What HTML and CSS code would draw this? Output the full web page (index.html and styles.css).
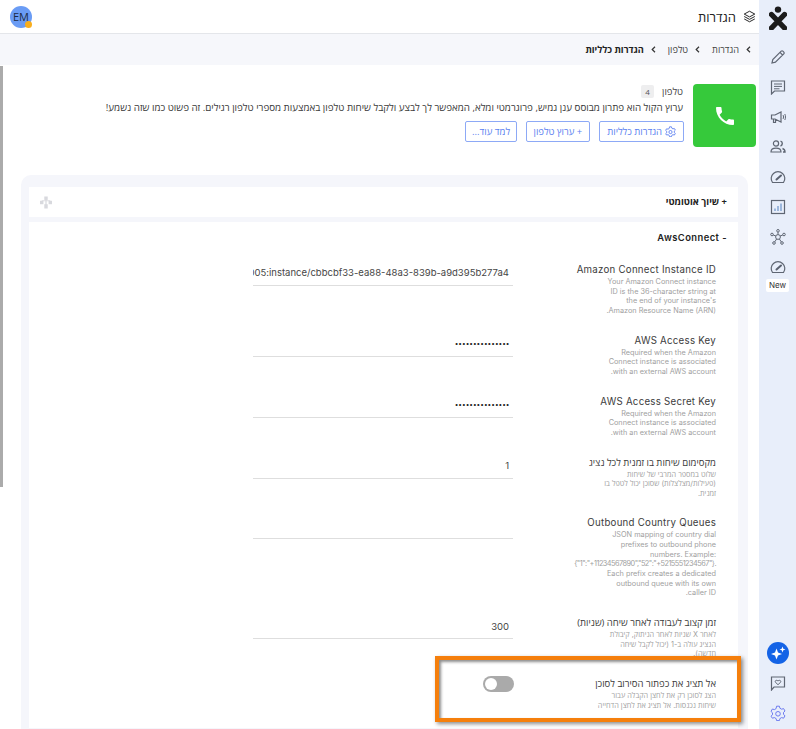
FILE: index.html
```html
<!DOCTYPE html>
<html lang="he" dir="rtl">
<head>
<meta charset="utf-8">
<title>הגדרות</title>
<link rel="stylesheet" href="styles.css">
</head>
<body>
<div class="app">
  <nav class="rail">
    <svg class="logo" viewBox="0 0 18 24" width="18" height="24"><circle cx="9" cy="3.600" r="3.200" fill="#1c1c1c"/><path d="M2.500 8.500 15.500 22M15.500 8.500 2.500 22" stroke="#1c1c1c" stroke-width="5.400" stroke-linecap="round"/></svg>
    <a class="rail-item"><svg viewBox="0 0 16 16" class="ico"><path d="M2 14l.8-3.400L11.200 2.200a1.200 1.200 0 0 1 1.700 0l.9.9a1.200 1.200 0 0 1 0 1.700L5.400 13.200 2 14zM10 3.400l2.600 2.600" fill="none" stroke="#5f6673" stroke-width="1.200"/></svg></a>
    <a class="rail-item"><svg viewBox="0 0 16 16" class="ico"><path d="M1.500 2h13v10H4.500l-3 3V2z" fill="none" stroke="#5f6673" stroke-width="1.200"/><path d="M4 5h8M4 7.400h8M4 9.800h5.500" stroke="#5f6673" stroke-width="1"/></svg></a>
    <a class="rail-item"><svg viewBox="0 0 16 16" class="ico"><path d="M1.500 6h3.500l6-3v10l-6-3H1.500V6zM3.500 10v3.500h2V10" fill="none" stroke="#5f6673" stroke-width="1.200"/><path d="M13 6c.7.8.7 3.200 0 4M14.800 5c.9 1.500.9 4.500 0 6" fill="none" stroke="#5f6673" stroke-width="1"/></svg></a>
    <a class="rail-item"><svg viewBox="0 0 16 16" class="ico"><circle cx="6" cy="4.500" r="2.600" fill="none" stroke="#5f6673" stroke-width="1.200"/><path d="M1 13c0-2.500 2-3.800 5-3.800s5 1.300 5 3.800H1z" fill="none" stroke="#5f6673" stroke-width="1.200"/><path d="M10.500 2.200a2.500 2.500 0 0 1 0 4.800M12.500 9.500c1.500.5 2.500 1.600 2.500 3.500h-2" fill="none" stroke="#5f6673" stroke-width="1.400"/></svg></a>
    <a class="rail-item"><svg viewBox="0 0 16 16" class="ico"><path d="M2.500 13.500A6.800 6.800 0 1 1 13.500 13.500H2.500z" fill="none" stroke="#5f6673" stroke-width="1.200"/><path d="M6.500 10.500 11 6.500" stroke="#5b6270" stroke-width="2" stroke-linecap="round"/></svg></a>
    <a class="rail-item"><svg viewBox="0 0 16 16" class="ico"><rect x="1.500" y="1.500" width="13" height="13" fill="none" stroke="#5f6673" stroke-width="1.200"/><path d="M5 12V9.500M8 12V7M11 12V4.500" stroke="#6b93c9" stroke-width="1.200"/></svg></a>
    <a class="rail-item"><svg viewBox="0 0 16 16" class="ico"><g fill="none" stroke="#5f6673" stroke-width="1"><circle cx="8" cy="8" r="2.400"/><circle cx="8" cy="1.800" r="1.300"/><circle cx="2" cy="5.500" r="1.300"/><circle cx="14" cy="5.500" r="1.300"/><circle cx="4" cy="14" r="1.300"/><circle cx="12" cy="14" r="1.300"/><path d="M8 3.100v2.500M3.200 6l2.700 1M12.800 6l-2.700 1M4.700 12.900l2-3M11.300 12.900l-2-3"/></g></svg></a>
    <a class="rail-item"><svg viewBox="0 0 16 16" class="ico"><path d="M2.500 13.500A6.800 6.800 0 1 1 13.500 13.500H2.500z" fill="none" stroke="#5f6673" stroke-width="1.200"/><path d="M6.500 10.500 11 6.500" stroke="#5b6270" stroke-width="2" stroke-linecap="round"/></svg></a>
    <span class="new-chip">New</span>
    <div class="rail-bottom">
      <span class="ai-btn"><svg viewBox="0 0 22 22" width="22" height="22"><circle cx="11" cy="11" r="11" fill="#1463e6"/><path d="M9.500 6.500 11 10.500l4 1.500-4 1.500-1.500 4-1.500-4-4-1.500 4-1.500zM15.500 4.500l.8 2.200 2.200.8-2.200.8-.8 2.200-.8-2.200-2.200-.8 2.200-.8z" fill="#fff"/></svg></span>
      <a class="rail-item"><svg viewBox="0 0 16 16" class="ico"><path d="M1.500 2h13v10H4l-2.500 3V2z" fill="none" stroke="#5f6673" stroke-width="1.200"/><path d="M8 9.800 5.500 7.200c-1-1.300.9-2.800 2.500-1.200 1.600-1.600 3.500-.1 2.500 1.200z" fill="none" stroke="#5f6673" stroke-width="1"/></svg></a>
      <a class="rail-item"><svg viewBox="0 0 16 16" class="ico"><path d="M6.600 1.200h2.800l.5 2 1.700 1 2-.6 1.400 2.400-1.500 1.400v2l1.500 1.400-1.400 2.400-2-.6-1.700 1-.5 2H6.600l-.5-2-1.700-1-2 .6L1 11.200l1.500-1.400v-2L1 6.400l1.400-2.400 2 .6 1.700-1z" fill="none" stroke="#6d7bf0" stroke-width="1"/><circle cx="8" cy="8.800" r="2.300" fill="none" stroke="#6d7bf0" stroke-width="1"/></svg></a>
    </div>
  </nav>

  <div class="main">
    <header class="topbar">
      <div class="page-title">
        <svg viewBox="0 0 16 16" width="13" height="13"><path d="M8 1.500 14.500 5 8 8.500 1.500 5z" fill="none" stroke="#222" stroke-width="1.200"/><path d="M1.500 8 8 11.500 14.500 8M1.500 11 8 14.500 14.500 11" fill="none" stroke="#222" stroke-width="1.200"/></svg>
        <span>הגדרות</span>
      </div>
      <div class="avatar">EM<i class="presence"></i></div>
    </header>
    <div class="crumbs">
      <svg class="chev" viewBox="0 0 5 7"><path d="M4 .8 1.200 3.500 4 6.200" fill="none" stroke="#333" stroke-width="1.200"/></svg><span class="crumb">הגדרות</span>
      <svg class="chev" viewBox="0 0 5 7"><path d="M4 .8 1.200 3.500 4 6.200" fill="none" stroke="#333" stroke-width="1.200"/></svg><span class="crumb">טלפון</span>
      <svg class="chev" viewBox="0 0 5 7"><path d="M4 .8 1.200 3.500 4 6.200" fill="none" stroke="#333" stroke-width="1.200"/></svg><strong class="crumb">הגדרות כלליות</strong>
    </div>
    <div class="scrollthumb"></div>
    <section class="intro">
      <div class="tile"><svg viewBox="0 0 24 24" width="24" height="24"><path fill="#fff" d="M6.620 10.790c1.440 2.830 3.760 5.140 6.590 6.590l2.200-2.200c.27-.27.67-.36 1.020-.24 1.120.37 2.330.57 3.570.57.55 0 1 .45 1 1V20c0 .55-.45 1-1 1-9.390 0-17-7.610-17-17 0-.55.45-1 1-1h3.500c.55 0 1 .45 1 1 0 1.250.2 2.450.57 3.570.11.35.03.74-.25 1.020l-2.200 2.200z"/></svg></div>
      <div class="intro-body">
        <div class="intro-head"><span class="intro-name">טלפון</span><span class="badge">4</span></div>
        <p class="intro-text">ערוץ הקול הוא פתרון מבוסס ענן גמיש, פרוגרמטי ומלא, המאפשר לך לבצע ולקבל שיחות טלפון באמצעות מספרי טלפון רגילים. זה פשוט כמו שזה נשמע!</p>
        <div class="actions">
          <button class="btn"><svg viewBox="0 0 16 16" width="11" height="11"><path d="M6.600 1.200h2.800l.5 2 1.700 1 2-.6 1.400 2.400-1.500 1.400v2l1.500 1.400-1.400 2.400-2-.6-1.700 1-.5 2H6.600l-.5-2-1.700-1-2 .6L1 11.200l1.500-1.400v-2L1 6.400l1.400-2.400 2 .6 1.700-1z" fill="none" stroke="#5b7ff0" stroke-width="1.300"/><circle cx="8" cy="8.800" r="2.300" fill="none" stroke="#5b7ff0" stroke-width="1.300"/></svg>הגדרות כלליות</button>
          <button class="btn">+ ערוץ טלפון</button>
          <button class="btn btn-more">למד עוד...</button>
        </div>
      </div>
    </section>

    <section class="panel">
      <div class="card card-collapsed">
        <h3 class="card-title">+ שיוך אוטומטי</h3>
        <svg class="tree" viewBox="0 0 14 14" width="12" height="13"><g fill="#d8d9de"><rect x="5" y="0" width="4" height="4"/><rect x="0" y="5" width="4" height="4"/><rect x="10" y="5" width="4" height="4"/><rect x="5" y="9" width="4" height="5"/><rect x="6.300" y="3" width="1.400" height="7"/><rect x="2" y="4.500" width="10" height="1"/></g></svg>
      </div>
      <div class="card">
        <h3 class="card-title card-title-en">- AwsConnect</h3>
        <div class="form">
          <div class="row">
            <div class="label"><h4>Amazon Connect Instance ID</h4><p>Your Amazon Connect instance<br>ID is the 36-character string at<br>the end of your instance's<br>Amazon Resource Name (ARN).</p></div>
            <input class="field" type="text" aria-label="Instance ID" value="arn:aws:connect:us-east-1:123456789005:instance/cbbcbf33-ea88-48a3-839b-a9d395b277a4">
          </div>
          <div class="row">
            <div class="label"><h4>AWS Access Key</h4><p>Required when the Amazon<br>Connect instance is associated<br>with an external AWS account.</p></div>
            <input class="field field-secret" type="password" aria-label="Access Key" value="xxxxxxxxxxxxxxx">
          </div>
          <div class="row">
            <div class="label"><h4>AWS Access Secret Key</h4><p>Required when the Amazon<br>Connect instance is associated<br>with an external AWS account.</p></div>
            <input class="field field-secret" type="password" aria-label="Secret Key" value="xxxxxxxxxxxxxxx">
          </div>
          <div class="row">
            <div class="label"><h4 class="he">מקסימום שיחות בו זמנית לכל נציג</h4><p>שלוט במספר המרבי של שיחות<br>(פעילות/מצלצלות) שסוכן יכול לטפל בו<br>זמנית.</p></div>
            <input class="field" type="text" aria-label="Max" value="1">
          </div>
          <div class="row">
            <div class="label"><h4>Outbound Country Queues</h4><p>JSON mapping of country dial<br>prefixes to outbound phone<br><bdi dir="ltr">numbers. Example:</bdi><br><bdi class="json" dir="ltr">{"1":"+11234567890","52":"+5215551234567"}.</bdi><br>Each prefix creates a dedicated<br>outbound queue with its own<br>caller ID.</p></div>
            <input class="field" type="text" aria-label="Queues" value="">
          </div>
          <div class="row">
            <div class="label"><h4 class="he">זמן קצוב לעבודה לאחר שיחה (שניות)</h4><p>לאחר X שניות לאחר הניתוק, קיבולת<br>הנציג עולה ב-1 (יכול לקבל שיחה<br>חדשה).</p></div>
            <input class="field" type="text" aria-label="Timeout" value="300">
          </div>
          <div class="row">
            <div class="label"><h4 class="he">אל תציג את כפתור הסירוב לסוכן</h4><p>הצג לסוכן רק את לחצן הקבלה עבור<br>שיחות נכנסות. אל תציג את לחצן הדחייה</p></div>
            <div class="toggle-cell"><span class="toggle"><i></i></span></div>
          </div>
        </div>
      </div>
    </section>
    <div class="highlight"></div>
  </div>
</div>
</body>
</html>
```
FILE: styles.css
```css
* { box-sizing: border-box; }
html, body { margin: 0; height: 729px; overflow: hidden; }
body { font-family: "Open Sans", "Liberation Sans", sans-serif; color: #222; background: #fff; }
h3, h4, p { margin: 0; }
.app { display: flex; height: 729px; overflow: hidden; }

.rail { width: 37px; flex: none; background: #e8eefa; display: flex; flex-direction: column; align-items: center; padding-top: 6px; }
.logo { margin-bottom: 12px; flex: none; }
.rail-item { width: 16px; height: 30px; display: flex; align-items: center; justify-content: center; flex: none; }
.ico { width: 16px; height: 16px; display: block; }
.new-chip { margin-top: -3px; background: #fff; border-radius: 2px; font: 400 8px/13px Inter, sans-serif; color: #333; padding: 0 3px; width: 23px; text-align: center; }
.rail-bottom { margin-top: auto; display: flex; flex-direction: column; align-items: center; padding-bottom: 1px; }
.ai-btn { display: block; height: 22px; margin-bottom: 4px; }

.main { flex: 1; min-width: 0; height: 729px; overflow: hidden; position: relative; }
.topbar { height: 34px; border-bottom: 1px solid #e4e6ea; display: flex; align-items: center; justify-content: space-between; padding: 0 3px 0 0; }
.page-title { display: flex; align-items: center; gap: 7px; font-size: 13px; color: #222; }
.avatar { position: relative; width: 22px; height: 22px; margin: 0 0 0 10px; border-radius: 50%; background: #6a9cf5; color: #1b2a44; font: 11px/22px "Open Sans", sans-serif; text-align: center; }
.presence { position: absolute; width: 7px; height: 7px; left: 15px; top: 15px; background: #f9ae1d; border-radius: 50%; }
.crumbs { height: 31px; background: #f6f7fb; display: flex; align-items: center; padding-right: 8px; font-size: 9.200px; color: #444; }
.crumb { margin-left: 12px; }
.crumbs strong { color: #222; font-weight: 700; }
.chev { width: 5px; height: 7px; margin-left: 7px; flex: none; }
.scrollthumb { position: absolute; left: 0; top: 66px; width: 3px; height: 421px; background: #ababab; }

.intro { display: flex; gap: 9px; padding: 19px 3px 0 0; height: 110px; }
.tile { width: 63px; height: 63px; flex: none; background: #36c93b; border-radius: 4px; display: flex; align-items: center; justify-content: center; }
.intro-head { display: flex; align-items: center; gap: 8px; height: 14px; padding-right: 1px; }
.intro-name { font-size: 9.500px; color: #444; }
.badge { width: 13px; height: 13px; background: #eeeeef; border-radius: 2px; font-size: 8px; line-height: 13px; text-align: center; color: #555; }
.intro-text { font-size: 9.750px; line-height: 12px; color: #3a3a3a; margin-top: 4px; padding-right: 1px; white-space: nowrap; }
.actions { display: flex; gap: 9px; margin-top: 7px; }
.btn { height: 21px; padding: 0 7px; background: #fff; border: 1px solid #8da9f6; border-radius: 2px; color: #5b7ff0; font: 9.500px "Open Sans", sans-serif; display: flex; align-items: center; gap: 3px; }
.btn-more { padding: 0 5.500px; }

.panel { margin: 0 11px 0 21px; background: #f5f6fb; border-radius: 10px 10px 0 0; padding: 12px 10px 0 8px; height: 600px; }
.card { background: #fff; padding: 0 11px 0 0; position: relative; }
.card-collapsed { height: 30px; margin-bottom: 5px; display: flex; align-items: center; justify-content: space-between; padding-left: 11px; }
.card-title { font: 700 9.400px/16px "Open Sans", sans-serif; color: #222; }
.card-title-en { font: 600 9.400px/16px Inter, sans-serif; letter-spacing: .45px; padding-top: 8px; }
.tree { flex: none; }
.form { padding: 16.950px 11px 0 0; display: flex; flex-direction: column; opacity: .99; }
.row { display: flex; gap: 63px; padding-bottom: 18px; }
.label { width: 140px; flex: none; }
.label h4 { font: 400 9.700px/14px Inter, "Open Sans", sans-serif; letter-spacing: .25px; color: #3a3a3a; white-space: nowrap; }
.label h4.he { font: 400 9.500px/14px "Open Sans", sans-serif; letter-spacing: 0; }
.label p { font: 400 7.300px/9.650px Inter, "Open Sans", sans-serif; color: #a0a0a0; white-space: nowrap; }
.json { letter-spacing: -.5px; }
.field { width: 260px; height: 23px; flex: none; border: 0; border-bottom: 1px solid #dedede; padding: 0 4px 2px 0; outline: 0; background: transparent; font: 9.500px Inter, "Open Sans", sans-serif; color: #444; direction: rtl; text-align: right; }
.field-secret { font-size: 6.500px; color: #222; padding-right: 3.500px; }
.toggle-cell { width: 260px; flex: none; }
.toggle { display: block; width: 31px; height: 16px; margin: -1px -1px 0 0; background: #aaa; border-radius: 8px; position: relative; }
.toggle i { position: absolute; left: 2px; top: 2px; width: 12px; height: 12px; background: #fff; border-radius: 50%; }
.highlight { position: absolute; left: 435px; top: 656px; width: 306px; height: 66px; border: 4px solid #f57f0c; box-shadow: 2px 2px 4px rgba(0,0,0,.45), inset 2px 2px 3px rgba(0,0,0,.45); pointer-events: none; }
```
